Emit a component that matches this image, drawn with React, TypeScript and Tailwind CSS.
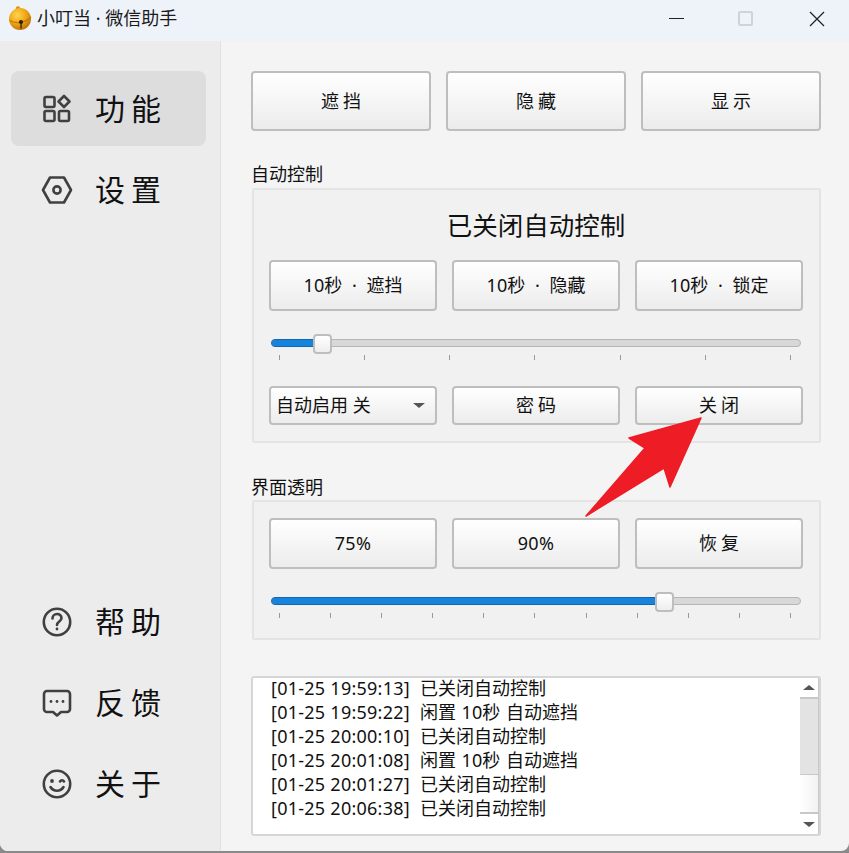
import { ReactNode } from "react";

const FONT = "font-['Noto_Sans','Noto_Sans_CJK_SC',sans-serif]";

const Btn = ({ children, className = "" }: { children: ReactNode; className?: string }) => (
  <button
    className={`flex items-center justify-center rounded-[4px] border-2 border-[#bebebe] bg-gradient-to-b from-white to-[#ececec] text-[18px] text-[#111] ${className}`}
  >
    {children}
  </button>
);

const iconClass = "w-[30px] h-[30px] fill-none stroke-[#404040] stroke-[2.6]";

const GridIcon = () => (
  <svg viewBox="0 0 30 30" className={iconClass}>
    <rect x="2.500" y="3" width="10" height="10" rx="1.500" />
    <rect x="2.500" y="17" width="10" height="10" rx="1.500" />
    <rect x="17" y="17" width="10" height="10" rx="1.500" />
    <path d="M22 2l5.500 5.500-5.500 5.500-5.500-5.500z" strokeLinejoin="round" />
  </svg>
);
const HexIcon = () => (
  <svg viewBox="0 0 30 30" className="h-[30px] w-[34px] fill-none stroke-[#404040] stroke-[2.6]">
    <path d="M8 2.500h14l7 12.500-7 12.500H8L1 15z" strokeLinejoin="round" />
    <circle cx="15" cy="15" r="3.600" />
  </svg>
);
const HelpIcon = () => (
  <svg viewBox="0 0 30 30" className={iconClass}>
    <circle cx="15" cy="15" r="13.200" />
    <path d="M10.500 11.500c0-6 9-6 9-.5 0 3.500-4.500 3.500-4.500 7" strokeLinecap="round" />
    <circle cx="15" cy="22" r="1.400" className="fill-[#404040] stroke-none" />
  </svg>
);
const ChatIcon = () => (
  <svg viewBox="0 0 30 30" className={iconClass}>
    <path d="M5 3h20a3 3 0 0 1 3 3v15a3 3 0 0 1-3 3h-6l-4 3.500-4-3.500H5a3 3 0 0 1-3-3V6a3 3 0 0 1 3-3z" strokeLinejoin="round" />
    <circle cx="9" cy="13.500" r="1.400" className="fill-[#404040] stroke-none" />
    <circle cx="15" cy="13.500" r="1.400" className="fill-[#404040] stroke-none" />
    <circle cx="21" cy="13.500" r="1.400" className="fill-[#404040] stroke-none" />
  </svg>
);
const SmileIcon = () => (
  <svg viewBox="0 0 30 30" className={iconClass}>
    <circle cx="15" cy="15" r="13.200" />
    <circle cx="10" cy="12" r="1.900" className="fill-[#404040] stroke-none" />
    <path d="M18 12.500c1-1.600 3-1.600 4 0" strokeLinecap="round" />
    <path d="M8.500 18c3 5 10 5 13 0" strokeLinecap="round" />
  </svg>
);

const Bell = () => (
  <svg viewBox="0 0 24 25" className="h-[25px] w-[24px]">
    <defs>
      <radialGradient id="bell" cx="38%" cy="32%" r="75%">
        <stop offset="0%" stopColor="#ffd54f" />
        <stop offset="55%" stopColor="#eea412" />
        <stop offset="100%" stopColor="#b8690a" />
      </radialGradient>
    </defs>
    <circle cx="10" cy="2.500" r="2.200" fill="#d6930f" />
    <circle cx="12" cy="13" r="11" fill="url(#bell)" />
    <path d="M1.500 14.500C7 18 17 17 23 11" stroke="#c47a0a" strokeWidth="1.300" fill="none" />
    <circle cx="13" cy="16" r="2.100" fill="#33200a" />
    <rect x="12.400" y="16.500" width="1.300" height="6" fill="#33200a" />
  </svg>
);

const NavItem = ({ icon, label, active }: { icon: ReactNode; label: string; active?: boolean }) => (
  <div className={`flex h-[75px] items-center rounded-[8px] ${active ? "bg-[#dddddd]" : ""}`}>
    <div className="flex w-[85px] shrink-0 justify-center pl-[6px]">{icon}</div>
    <span className="-ml-px text-[30px] leading-none tracking-[6px] text-[#111]">{label}</span>
  </div>
);

const Slider = ({ percent, ticks }: { percent: number; ticks: number }) => (
  <div className="mt-[28px] px-[2px]">
    <div className="relative h-[8px] rounded-[4px] border border-[#b5b5b5] bg-[#d8d8d8]">
      <div
        className="h-full rounded-l-[4px] bg-[#1683dc] outline outline-1 outline-[#1467a8]"
        style={{ width: `${percent}%` }}
      />
      <div
        className="absolute top-[-6px] h-[20px] w-[19px] rounded-[4px] border-2 border-[#bebebe] bg-gradient-to-b from-white to-[#eeeeee]"
        style={{ left: `calc(${percent}% - 12px)` }}
      />
    </div>
    <div className="mt-[8px] flex h-[5px] justify-between pl-[8px] pr-[10px]">
      {Array.from({ length: ticks }).map((_, i) => (
        <div key={i} className="h-[5px] w-px bg-[#999]" />
      ))}
    </div>
  </div>
);

const logs = [
  ["[01-25 19:59:13]", "已关闭自动控制"],
  ["[01-25 19:59:22]", "闲置 10秒 自动遮挡"],
  ["[01-25 20:00:10]", "已关闭自动控制"],
  ["[01-25 20:01:08]", "闲置 10秒 自动遮挡"],
  ["[01-25 20:01:27]", "已关闭自动控制"],
  ["[01-25 20:06:38]", "已关闭自动控制"],
];

const ScrollBar = () => (
  <div className="flex w-[19px] flex-col border-r border-[#c8c8c8] bg-white">
    <div className="flex h-[21px] items-center justify-center border-b-2 border-[#c8c8c8]">
      <div className="h-0 w-0 border-x-[6px] border-b-[5px] border-x-transparent border-b-[#555]" />
    </div>
    <div className="h-[75px] bg-[#e3e3e3]" />
    <div className="flex-1 border-t border-[#c8c8c8] bg-gradient-to-r from-white to-[#f2f2f2]" />
    <div className="flex h-[22px] items-center justify-center border-t-2 border-[#c8c8c8]">
      <div className="h-0 w-0 border-x-[6px] border-t-[5px] border-x-transparent border-t-[#555]" />
    </div>
  </div>
);

export default function App() {
  return (
    <div className={`relative flex h-[853px] w-[849px] flex-col overflow-hidden bg-[#8a8a8a] ${FONT}`}>
      <div className="flex h-[851px] flex-col overflow-hidden rounded-bl-[8px] rounded-br-[8px] bg-[#f4f4f4]">
        {/* title bar */}
        <div className="flex h-[41px] shrink-0 items-center bg-[#eef3fa] pb-[4px] pl-[8px]">
          <Bell />
          <span className="ml-[5px] text-[18px] text-[#1a1a1a]">小叮当 · 微信助手</span>
          <div className="ml-auto flex items-center">
            <div className="h-[1.500px] w-[15px] bg-[#222]" />
            <div className="ml-[54px] h-[15px] w-[15px] rounded-[2px] border-2 border-[#cfd3d8]" />
            <svg viewBox="0 0 16 16" className="ml-[56px] mr-[24px] h-[16px] w-[16px] stroke-[#222] stroke-[1.300]">
              <path d="M1 1l14 14M15 1L1 15" />
            </svg>
          </div>
        </div>

        <div className="flex min-h-0 flex-1">
          {/* sidebar */}
          <div className="flex w-[221px] shrink-0 flex-col justify-between border-r border-[#e2e2e2] bg-[#ececec] pb-[30px] pl-[11px] pr-[14px] pt-[30px]">
            <div className="flex flex-col gap-[6px]">
              <NavItem active icon={<GridIcon />} label="功能" />
              <NavItem icon={<HexIcon />} label="设置" />
            </div>
            <div className="flex flex-col gap-[6px]">
              <NavItem icon={<HelpIcon />} label="帮助" />
              <NavItem icon={<ChatIcon />} label="反馈" />
              <NavItem icon={<SmileIcon />} label="关于" />
            </div>
          </div>

          {/* content */}
          <div className="flex w-[600px] flex-col pl-[30px] pt-[30px]">
            <div className="grid w-[570px] grid-cols-3 gap-[15px]">
              <Btn className="h-[60px] pl-[4px] pt-[1px] tracking-[4px]">遮挡</Btn>
              <Btn className="h-[60px] pl-[4px] pt-[1px] tracking-[4px]">隐藏</Btn>
              <Btn className="h-[60px] pl-[4px] pt-[1px] tracking-[4px]">显示</Btn>
            </div>

            <div className="mt-[31px] h-[26px] text-[18px] leading-[24px] text-[#111]">自动控制</div>
            <div className="ml-px h-[255px] w-[569px] rounded-[2px] border-2 border-[#e4e4e4] bg-[#f1f1f1] pl-[15px] pr-[16px]">
              <div className="h-[70px] pt-[15px] text-center text-[25.500px] leading-[40px] text-[#111]">已关闭自动控制</div>
              <div className="grid grid-cols-3 gap-[15px]">
                <Btn className="h-[51px] [word-spacing:5px]">10秒 · 遮挡</Btn>
                <Btn className="h-[51px] [word-spacing:5px]">10秒 · 隐藏</Btn>
                <Btn className="h-[51px] [word-spacing:5px]">10秒 · 锁定</Btn>
              </div>
              <Slider percent={10} ticks={7} />
              <div className="mt-[26px] grid grid-cols-3 gap-[15px]">
                <Btn className="h-[39px] !justify-between pl-[5px] pr-[10px]">
                  <span>自动启用 关</span>
                  <span className="h-0 w-0 border-x-[6px] border-t-[5px] border-x-transparent border-t-[#555]" />
                </Btn>
                <Btn className="h-[39px] pl-[4px] tracking-[4px]">密码</Btn>
                <Btn className="h-[39px] pl-[4px] tracking-[4px]">关闭</Btn>
              </div>
            </div>

            <div className="mt-[32px] h-[25px] text-[18px] leading-[24px] text-[#111]">界面透明</div>
            <div className="ml-px h-[140px] w-[569px] rounded-[2px] border-2 border-[#e4e4e4] bg-[#f1f1f1] pl-[15px] pr-[16px] pt-[16px]">
              <div className="grid grid-cols-3 gap-[15px]">
                <Btn className="h-[51px] tracking-[0.3px]">75%</Btn>
                <Btn className="h-[51px] tracking-[0.3px]">90%</Btn>
                <Btn className="h-[51px] pl-[4px] tracking-[4px]">恢复</Btn>
              </div>
              <Slider percent={74.900} ticks={11} />
            </div>

            <div className="mt-[36px] flex h-[160px] w-[570px] rounded-[3px] border-2 border-[#d6d6d6] bg-white">
              <div className="flex-1 pl-[18px] text-[18px] leading-[24px] text-[#111]">
                <div className="-mt-[2px]">
                  {logs.map(([time, text], i) => (
                    <div key={i} className="flex h-[24px] items-center gap-[10px] whitespace-nowrap">
                      <span className="tracking-[0.25px]">{time}</span>
                      <span className="[word-spacing:1px]">{text}</span>
                    </div>
                  ))}
                </div>
              </div>
              <ScrollBar />
            </div>
          </div>
        </div>
      </div>

      {/* annotation arrow */}
      <svg viewBox="0 0 849 853" className="pointer-events-none absolute left-0 top-0 h-[853px] w-[849px]">
        <path
          d="M701 418L629 438 645 448 586 516 664 468 670 487z"
          fill="#ee1c25"
          stroke="#ee1c25"
          strokeWidth="1.500"
          strokeLinejoin="round"
        />
      </svg>
    </div>
  );
}
